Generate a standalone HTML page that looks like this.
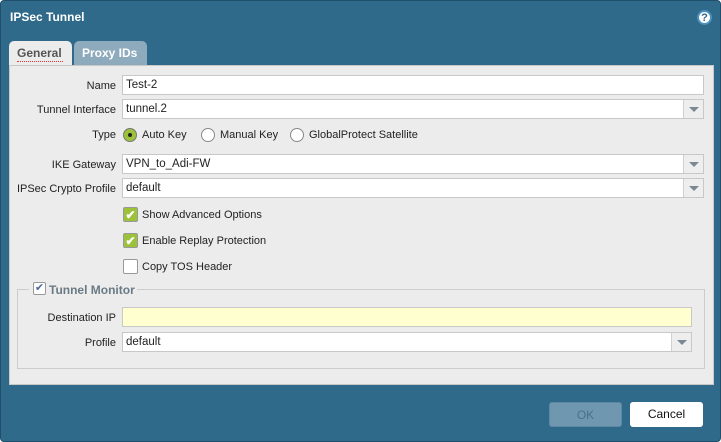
<!DOCTYPE html><html><head><style>
*{box-sizing:border-box}body{margin:0;width:721px;height:442px;background:#fff;font-family:"Liberation Sans",sans-serif;font-size:11px;color:#222;overflow:hidden;position:relative}
.dlg{position:absolute;left:0;top:0;width:721px;height:442px;background:#2f6a8a;border:1px solid #1f4f6a;border-radius:4px}
.a{position:absolute;white-space:nowrap}
.title{left:9px;top:9px;color:#fff;font-weight:bold;font-size:12px}
.help{left:696px;top:9px;width:15px;height:15px;border-radius:50%;background:#fff;color:#2f6a8a;font-weight:bold;font-size:11px;text-align:center;line-height:12px;border:2px solid #4a90c0}
.tab{top:40px;height:25px;border-radius:5px 5px 0 0;font-weight:bold;font-size:12px;padding:5px 8px}
.panel{left:8px;top:64px;width:705px;height:320px;background:#ececec;border:1px solid #c8c8c8}
.lbl{text-align:right;width:115px;left:0}
.in{left:121px;height:20px;width:582px;background:#fff;border:1px solid #c8c8c8;padding:3px 3px;font-size:11.5px}
.dd{position:absolute;right:0;top:0;width:20px;height:18px;border-left:1px solid #d0d0d0;background:#eee}
.dd:after{content:"";position:absolute;left:5px;top:7px;border-left:5px solid transparent;border-right:5px solid transparent;border-top:5px solid #7a8a95}
.rad{width:14px;height:14px;border-radius:50%;border:1px solid #888;background:#fff}
.cb{width:15px;height:15px;border:1px solid #999;background:#fff;border-radius:2px}
.cbo{background:#9cc23a;color:#fff;font-size:12px;text-align:center;line-height:14px;font-weight:bold}
.btn{top:401px;width:73px;height:25px;border-radius:3px;text-align:center;line-height:24px;font-size:12px}
</style></head><body><div class="dlg">
<div class="a title">IPSec Tunnel</div>
<div class="a help">?</div>
<div class="a tab" style="left:8px;width:63px;background:#ececec;color:#555;padding-left:8px">General<div style="border-bottom:1px dotted #e33;width:46px;margin-top:1px"></div></div>
<div class="a tab" style="left:73px;width:73px;background:#8eaabd;color:#fff">Proxy IDs</div>
<div class="a panel"></div>
<div class="a lbl" style="top:79px">Name</div><div class="a in" style="top:74px">Test-2</div>
<div class="a lbl" style="top:103px">Tunnel Interface</div><div class="a in" style="top:98px">tunnel.2<span class="dd"></span></div>
<div class="a lbl" style="top:128px">Type</div>
<div class="a rad" style="left:122px;top:127px;background:#9cc23a;border-color:#777"><div style="width:4px;height:4px;background:#222;border-radius:50%;margin:4px"></div></div><div class="a" style="left:141px;top:128px">Auto Key</div>
<div class="a rad" style="left:200px;top:127px"></div><div class="a" style="left:219px;top:128px">Manual Key</div>
<div class="a rad" style="left:289px;top:127px"></div><div class="a" style="left:308px;top:128px">GlobalProtect Satellite</div>
<div class="a lbl" style="top:158px">IKE Gateway</div><div class="a in" style="top:153px">VPN_to_Adi-FW<span class="dd"></span></div>
<div class="a lbl" style="top:182px">IPSec Crypto Profile</div><div class="a in" style="top:177px">default<span class="dd"></span></div>
<div class="a cb cbo" style="left:122px;top:206px">✔</div><div class="a" style="left:141px;top:208px">Show Advanced Options</div>
<div class="a cb cbo" style="left:122px;top:232px">✔</div><div class="a" style="left:141px;top:234px">Enable Replay Protection</div>
<div class="a cb" style="left:122px;top:258px"></div><div class="a" style="left:141px;top:260px">Copy TOS Header</div>
<div class="a" style="left:16px;top:288px;width:688px;height:80px;border:1px solid #ccc"></div>
<div class="a" style="left:28px;top:280px;width:108px;height:16px;background:#ececec"></div>
<div class="a cb" style="left:32px;top:281px;width:13px;height:13px;color:#4a6a9a;font-size:11px;line-height:11px;text-align:center">✔</div>
<div class="a" style="left:48px;top:282px;font-weight:bold;color:#6a7a85;font-size:12px">Tunnel Monitor</div>
<div class="a lbl" style="top:311px">Destination IP</div><div class="a in" style="top:306px;width:570px;background:#ffffd0"></div>
<div class="a lbl" style="top:336px">Profile</div><div class="a in" style="top:331px;width:570px">default<span class="dd"></span></div>
<div class="a btn" style="left:548px;background:#6f98b0;color:#4c6f86;border:1px solid #5f88a2">OK</div>
<div class="a btn" style="left:629px;background:#fff;color:#111">Cancel</div>
</div></body></html>
